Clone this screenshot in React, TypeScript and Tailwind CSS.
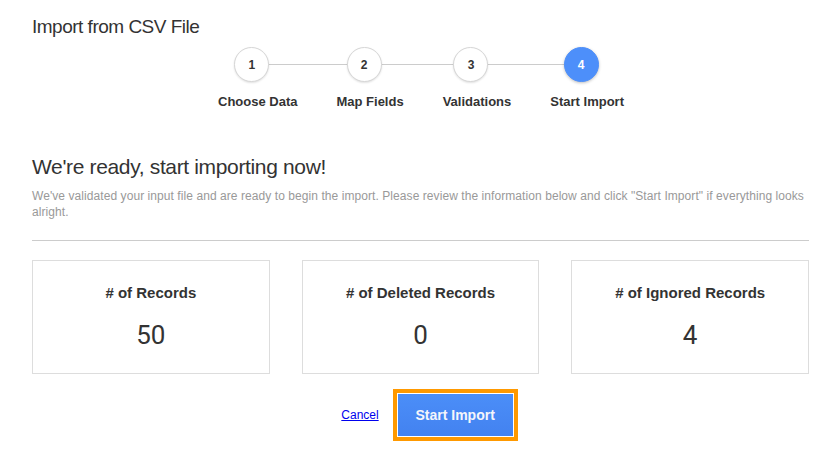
import React from "react";

const steps = [
  { n: 1, label: "Choose Data" },
  { n: 2, label: "Map Fields" },
  { n: 3, label: "Validations" },
  { n: 4, label: "Start Import" },
];

const stats = [
  { title: "# of Records", value: "50" },
  { title: "# of Deleted Records", value: "0" },
  { title: "# of Ignored Records", value: "4" },
];

const App = () => {
  return (
    <div className="min-h-screen bg-white text-[#333] font-['Liberation_Sans',Arial,sans-serif]">
      <div className="pl-[32px] pr-[7px] pt-[15px]">
        <h1 className="text-[19px] leading-[24px] tracking-[-0.5px] text-[#333]">Import from CSV File</h1>

        {/* Stepper */}
        <div className="flex mt-[8px] ml-[186px]">
          <div className="relative flex gap-[39px]">
            <div className="absolute left-[33px] right-[43px] top-[17px] h-px bg-[#ccc]" />
            {steps.map((s) => (
              <div key={s.n} className="relative flex flex-col items-center">
                <div
                  className={`mr-3 w-[35px] h-[35px] rounded-full flex items-center justify-center text-[12px] font-bold ${
                    s.n === 4
                      ? "bg-[#4d8ffa] text-white border border-[#4d8ffa] shadow-[0_1px_3px_rgba(0,0,0,0.25)]"
                      : "bg-white text-[#333] border border-[#d6d6d6] shadow-[0_1px_2px_rgba(0,0,0,0.12)]"
                  }`}
                >
                  {s.n}
                </div>
                <span className="mt-[12px] text-[13px] leading-[15px] font-bold text-[#333] whitespace-nowrap">
                  {s.label}
                </span>
              </div>
            ))}
          </div>
        </div>

        {/* Heading */}
        <h2 className="mt-[45px] text-[21px] leading-[26px] tracking-[-0.35px] text-[#333]">
          We're ready, start importing now!
        </h2>
        <p className="mt-[8px] text-[12px] leading-[16px] tracking-[0.07px] text-[#999]">
          We've validated your input file and are ready to begin the import. Please review the information below and click "Start Import" if everything looks alright.
        </p>
        <div className="mt-[20px] h-px bg-[#ccc]" />

        {/* Stats */}
        <div className="mt-[19px] grid grid-cols-3 gap-[32px]">
          {stats.map((st) => (
            <div
              key={st.title}
              className="h-[114px] border border-[#ddd] flex flex-col items-center pt-[23px]"
            >
              <div className="text-[15px] leading-[18px] font-bold text-[#333]">{st.title}</div>
              <div className="mt-[17px] font-['Roboto',sans-serif] text-[26px] leading-[32px] text-[#333]">{st.value}</div>
            </div>
          ))}
        </div>

        {/* Actions */}
        <div className="mt-[15px] flex items-center justify-center pl-[18px] gap-[14px]">
          <a href="#" className="text-[12px] text-[#0000ee] underline">
            Cancel
          </a>
          <div className="border-[4px] border-[#ff9900]">
            <button className="w-[117px] h-[44px] border border-white bg-gradient-to-b from-[#4b8ef8] to-[#4382f0] text-[#f4f6fb] text-[14px] font-bold">
              Start Import
            </button>
          </div>
        </div>
      </div>
    </div>
  );
};

export default App;
